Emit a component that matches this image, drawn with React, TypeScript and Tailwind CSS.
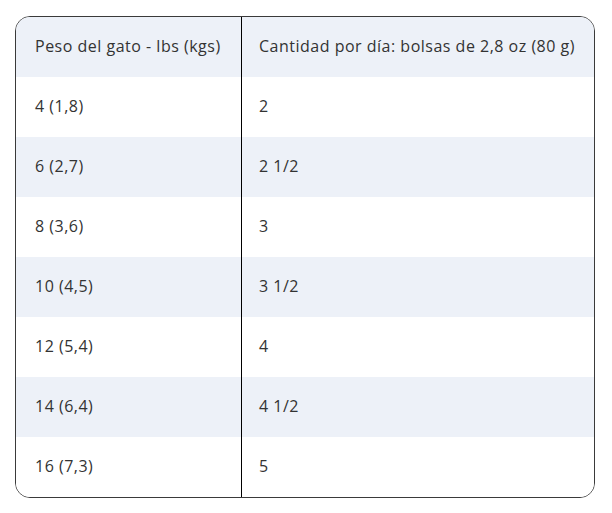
const rows: [string, string][] = [
  ["4 (1,8)", "2"],
  ["6 (2,7)", "2 1/2"],
  ["8 (3,6)", "3"],
  ["10 (4,5)", "3 1/2"],
  ["12 (5,4)", "4"],
  ["14 (6,4)", "4 1/2"],
  ["16 (7,3)", "5"],
];

export default function App() {
  return (
    <div className="min-h-screen bg-white pt-4 pl-[15px] text-[16px] tracking-[0.5px] text-[#333] font-['Open_Sans',sans-serif]">
      <div className="w-[580px] rounded-[15px] border border-[#3a3a3a] overflow-hidden">
        <div className="grid grid-cols-[226px_1fr] h-[60px] bg-[#edf1f8]">
          <div className="flex items-center pl-[19px] pb-[2px] border-r border-black">Peso del gato - lbs (kgs)</div>
          <div className="flex items-center pl-[17px] pb-[2px]">Cantidad por día: bolsas de 2,8 oz (80 g)</div>
        </div>
        {rows.map(([w, q], i) => (
          <div
            key={w}
            className={`grid grid-cols-[226px_1fr] h-[60px] ${i % 2 === 1 ? "bg-[#edf1f8]" : "bg-white"}`}
          >
            <div className="flex items-center pl-[19px] pb-[2px] border-r border-black">{w}</div>
            <div className="flex items-center pl-[17px] pb-[2px]">{q}</div>
          </div>
        ))}
      </div>
    </div>
  );
}
